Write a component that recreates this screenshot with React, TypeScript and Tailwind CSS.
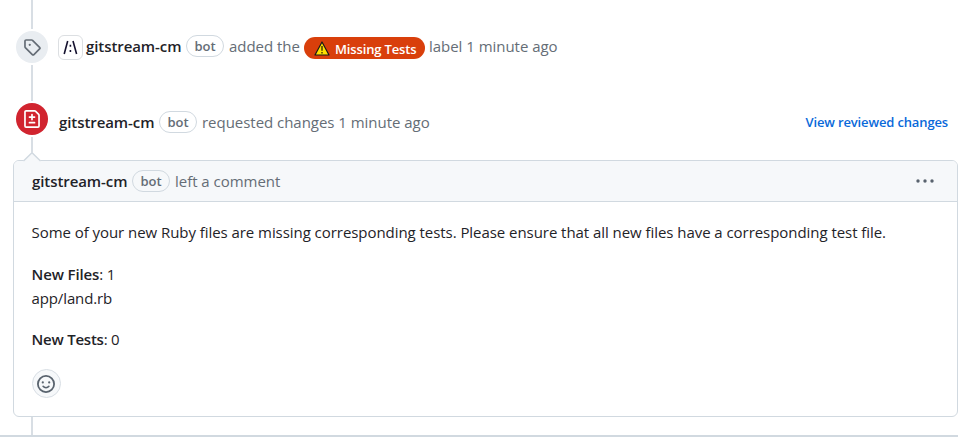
import type { ReactNode } from "react";

function Octicon({ path, size, className = "" }: { path: string; size: number; className?: string }) {
  return (
    <svg viewBox="0 0 16 16" width={size} height={size} fill="currentColor" className={`shrink-0 ${className}`} aria-hidden="true">
      <path d={path} />
    </svg>
  );
}

const TAG =
  "M1 7.775V2.75C1 1.784 1.784 1 2.75 1h5.025c.464 0 .91.184 1.238.513l6.25 6.25a1.75 1.75 0 0 1 0 2.474l-5.026 5.026a1.75 1.75 0 0 1-2.474 0l-6.25-6.25A1.752 1.752 0 0 1 1 7.775Zm1.5 0c0 .066.026.13.073.177l6.25 6.25a.25.25 0 0 0 .354 0l5.025-5.025a.25.25 0 0 0 0-.354l-6.25-6.25a.25.25 0 0 0-.177-.073H2.75a.25.25 0 0 0-.25.25ZM6 5a1 1 0 1 1 0 2 1 1 0 0 1 0-2Z";
const FILE_DIFF =
  "M1 1.75C1 .784 1.784 0 2.75 0h7.586c.464 0 .909.184 1.237.513l2.914 2.914c.329.328.513.773.513 1.237v9.586A1.75 1.75 0 0 1 13.25 16H2.75A1.75 1.75 0 0 1 1 14.25Zm1.75-.25a.25.25 0 0 0-.25.25v12.5c0 .138.112.25.25.25h10.5a.25.25 0 0 0 .25-.25V4.664a.25.25 0 0 0-.073-.177l-2.914-2.914a.25.25 0 0 0-.177-.073ZM8 3.25a.75.75 0 0 1 .75.75v1.5h1.5a.75.75 0 0 1 0 1.5h-1.5v1.5a.75.75 0 0 1-1.5 0V7h-1.5a.75.75 0 0 1 0-1.5h1.5V4A.75.75 0 0 1 8 3.25Zm-3 8a.75.75 0 0 1 .75-.75h4.5a.75.75 0 0 1 0 1.5h-4.5a.75.75 0 0 1-.75-.75Z";

function Smiley() {
  return (
    <svg viewBox="0 0 18 18" width="18" height="18" fill="none" stroke="#59636e" className="shrink-0" aria-hidden="true">
      <circle cx="9" cy="9" r="8.1" strokeWidth="1.8" />
      <path d="M6.1 11.3c1.5 1.9 4.3 1.9 5.8 0" strokeWidth="1.6" strokeLinecap="round" />
      <circle cx="5.8" cy="7.4" r="1.1" fill="#59636e" stroke="none" />
      <circle cx="12.2" cy="7.4" r="1.1" fill="#59636e" stroke="none" />
    </svg>
  );
}

function Author() {
  return <a className="w-[96px] shrink-0 text-[15px] font-semibold tracking-[-0.08px] text-[#1f2328]">gitstream-cm</a>;
}

function Bot() {
  return (
    <span className="ml-1 flex h-[22px] w-[38px] shrink-0 items-center justify-center rounded-full border border-[#d1d9e0] text-[13px] leading-none font-semibold text-[#656d76]">
      bot
    </span>
  );
}

function Muted({ className, children }: { className: string; children: ReactNode }) {
  return <span className={`shrink-0 tracking-[-0.03px] text-[#656d76] ${className}`}>{children}</span>;
}

export default function App() {
  return (
    <main className="h-[447px] w-[976px] overflow-hidden bg-white font-['Open_Sans','Noto_Sans',sans-serif] text-[15px] leading-6 whitespace-nowrap text-[#1f2328]">
      <div className="flex h-[160px]">
        <div className="ml-4 flex w-8 flex-col items-center">
          <div className="h-[29px] w-0.5 bg-[#d8dee4]" />
          <div className="my-0.5 flex size-8 items-center justify-center rounded-full bg-[#e9edf1] text-[#656d76]">
            <Octicon path={TAG} size={18} />
          </div>
          <div className="h-9 w-0.5 bg-[#d8dee4]" />
          <div className="my-0.5 flex size-8 items-center justify-center rounded-full bg-[#d1242f] text-white">
            <Octicon path={FILE_DIFF} size={18} />
          </div>
          <div className="h-[17px] w-0.5 bg-[#d8dee4]" />
        </div>

        <div className="flex flex-1 flex-col pt-[34px]">
          <div className="flex h-6 items-center pl-[10px]">
            <span className="mr-[3px] flex h-[25px] w-[25px] shrink-0 translate-y-[1px] items-center justify-center rounded-md border border-[#dcdfe2] bg-white">
              <svg viewBox="0 0 15 15" width="15" height="15" stroke="#15122f" strokeWidth="1.6" fill="none" aria-hidden="true">
                <path d="M4.7 1 1.2 14M10 1l3.6 13M7.4 4.8v1.9M7.4 10v1.9" />
              </svg>
            </span>
            <Author />
            <Bot />
            <Muted className="ml-[5px] w-[75px]">added the</Muted>
            <span className="mt-[3px] flex h-[22px] w-[121px] shrink-0 items-center rounded-full bg-[#d93f0b] pt-0.5 pl-[10px] text-[13px] font-semibold tracking-[-0.15px] text-white">
              <svg viewBox="0 0 16 15" width="16" height="15" className="mr-[5px] shrink-0" aria-hidden="true">
                <path d="M8 1 15 14H1Z" fill="#ffdf00" stroke="#181818" strokeWidth="1.2" strokeLinejoin="round" />
                <path d="M8 5v4.8M8 11v1.5" stroke="#453c00" strokeWidth="1.5" />
              </svg>
              Missing Tests
            </span>
            <Muted className="ml-[4px]">label 1 minute ago</Muted>
          </div>

          <div className="mt-[52px] flex h-6 items-center pr-7 pl-[11px]">
            <Author />
            <Bot />
            <Muted className="ml-[5px]">requested changes 1 minute ago</Muted>
            <a className="ml-auto text-[13px] font-semibold tracking-[-0.14px] text-[#0969da]">View reviewed changes</a>
          </div>
        </div>
      </div>

      <article className="relative ml-[13px] h-[257px] w-[945px] rounded-md border border-[#d1d9e0]">
        <svg viewBox="0 0 18 10" width="18" height="10" className="absolute -top-[9px] left-[9px]" aria-hidden="true">
          <path d="M0 9 9 0l9 9v1H0Z" fill="#f6f8fa" />
          <path d="M.5 9 9 .7 17.5 9" fill="none" stroke="#d1d9e0" strokeWidth="1.4" />
        </svg>
        <header className="flex h-[41px] items-center rounded-t-[5px] border-b border-[#d1d9e0] bg-[#f6f8fa] pr-[22px] pl-[18px]">
          <Author />
          <Bot />
          <Muted className="ml-[5px]">left a comment</Muted>
          <svg viewBox="0 0 20 4" width="20" height="4" fill="#59636e" className="ml-auto" aria-hidden="true">
            <circle cx="3" cy="2" r="1.7" />
            <circle cx="10" cy="2" r="1.7" />
            <circle cx="17" cy="2" r="1.7" />
          </svg>
        </header>
        <div className="pt-[18px] pr-[18px] pl-[17.5px]">
          <p className="tracking-[-0.053px]">
            Some of your new Ruby files are missing corresponding tests. Please ensure that all new files have a corresponding test file.
          </p>
          <p className="mt-[18px] tracking-[-0.12px]">
            <b className="font-semibold">New Files</b>: 1
            <br />
            app/land.rb
          </p>
          <p className="mt-[17px] tracking-[-0.22px]">
            <b className="font-semibold">New Tests</b>: 0
          </p>
          <button className="mt-[18px] flex size-[29px] items-center justify-center rounded-full border border-[#d8dee4] bg-[#f6f8fa]">
            <Smiley />
          </button>
        </div>
      </article>
      <div className="ml-[31px] h-[18px] w-0.5 bg-[#d8dee4]" />
      <div className="h-0.5 w-[958px] bg-[#d1d9e0]" />
    </main>
  );
}
